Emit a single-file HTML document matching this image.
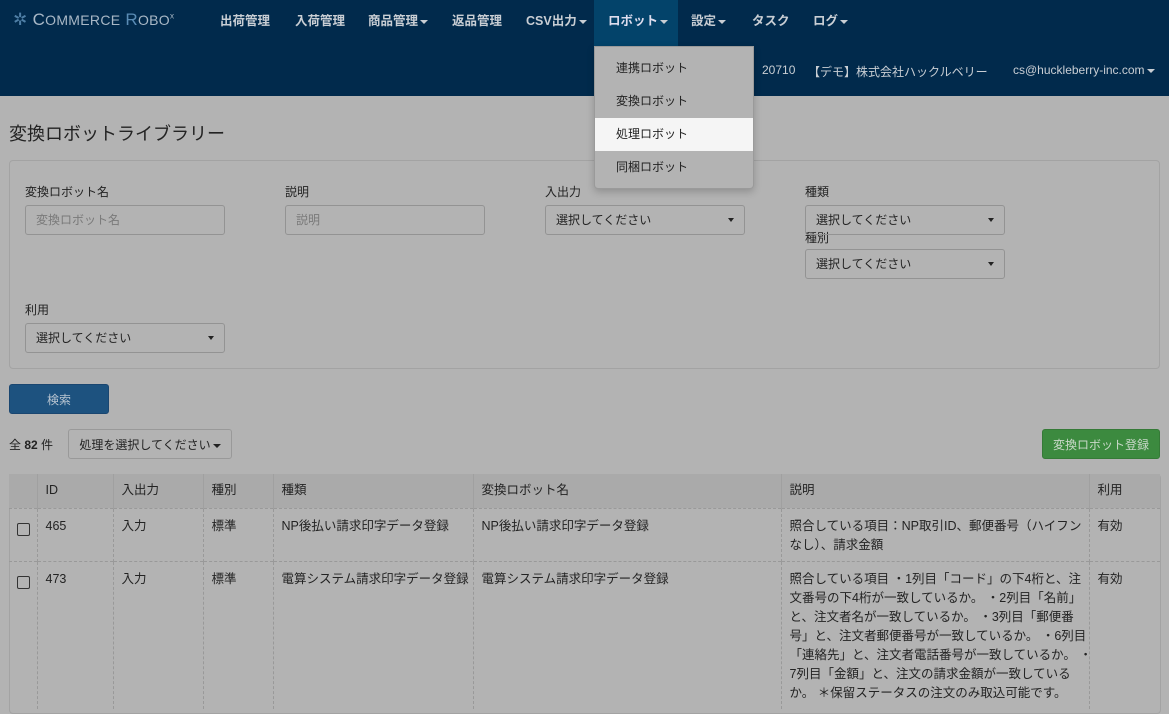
<!DOCTYPE html>
<html><head><meta charset="utf-8"><style>
*{box-sizing:border-box;margin:0;padding:0}
body{width:1169px;height:700px;overflow:hidden;background:#b3b3b3;font-family:"Liberation Sans","Noto Sans CJK JP",sans-serif;font-size:13px;color:#232323;position:relative}
.hdr{position:absolute;left:0;top:0;width:1169px;height:96px;background:#012a4c}
.nav{position:absolute;top:0;height:46px;line-height:42px;color:#c9ced4;font-size:12.5px;font-weight:bold}
.nav span{position:absolute;white-space:nowrap}
.car{display:inline-block;width:0;height:0;border-left:4px solid transparent;border-right:4px solid transparent;border-top:4px solid #c9ced4;vertical-align:middle;margin-left:2px}
.act{position:absolute;left:594px;top:0;width:84px;height:46px;background:#03436a}
.logo{position:absolute;left:13px;top:10px;color:#a9b8c6;font-size:17px;letter-spacing:0.3px}
.info{position:absolute;top:63px;color:#c9ced4;font-size:12px;white-space:nowrap}
.dd{position:absolute;left:594px;top:46px;width:160px;height:143px;background:#b3b3b3;border:1px solid #9a9a9a;border-radius:0 0 4px 4px;box-shadow:0 3px 8px rgba(0,0,0,.2)}
.dd div{height:33px;line-height:33px;padding-left:21px;font-size:12px}
.dd .hl{background:#f5f5f5}
h1{position:absolute;left:9px;top:120px;font-size:18px;font-weight:normal}
.panel{position:absolute;left:9px;top:160px;width:1151px;height:209px;border:1px solid #a3a3a3;border-radius:4px}
.lbl{position:absolute;font-size:12px}
.inp{position:absolute;width:200px;height:30px;border:1px solid #939393;border-radius:3px;line-height:28px;padding-left:10px;font-size:12px}
.ph{color:#7a7a7a}
.sel::after{content:"";position:absolute;right:10px;top:12px;border-left:3px solid transparent;border-right:3px solid transparent;border-top:4px solid #222}
.btn{position:absolute;height:30px;border-radius:3px;line-height:30px;text-align:center;font-size:12px}
table{position:absolute;left:9px;top:474px;width:1151px;border-collapse:collapse;font-size:12.5px;table-layout:fixed}
.tw{position:absolute;left:9px;top:474px;width:1152px;height:240px;border:1px solid #a3a3a3;border-radius:4px}
td,th{vertical-align:top;text-align:left;font-weight:normal;padding:8px 8px 6px;border-left:1px dashed #999;border-top:1px dashed #999;line-height:19px;white-space:nowrap;overflow:hidden}
th{background:#aaaaaa;border-left:1px solid #a0a0a0;border-top:none;height:34px;padding:7px 8px}
tr>*:first-child{border-left:none}
.cb{display:inline-block;width:13px;height:13px;border:1px solid #333;border-radius:2px;margin-top:6px;margin-left:0}
</style></head><body>
<div class="hdr">
 <div class="logo"><span style="color:#4f7fa6">✲</span> C<span style="font-size:14px">OMMERCE</span> <span style="color:#5a8cb5">R</span><span style="font-size:14px">OBO</span><sup style="font-size:8px">x</sup></div>
 <div class="act"></div>
 <div class="nav">
  <span style="left:220px">出荷管理</span>
  <span style="left:295px">入荷管理</span>
  <span style="left:368px">商品管理<i class="car"></i></span>
  <span style="left:452px">返品管理</span>
  <span style="left:526px">CSV出力<i class="car"></i></span>
  <span style="left:608px;color:#dde">ロボット<i class="car"></i></span>
  <span style="left:691px">設定<i class="car"></i></span>
  <span style="left:752px">タスク</span>
  <span style="left:813px">ログ<i class="car"></i></span>
 </div>
 <div class="info" style="left:762px">20710</div>
 <div class="info" style="left:808px">【デモ】株式会社ハックルベリー</div>
 <div class="info" style="left:1013px">cs@huckleberry-inc.com<i class="car"></i></div>
</div>
<h1>変換ロボットライブラリー</h1>
<div class="panel"></div>
<div class="lbl" style="left:25px;top:183px">変換ロボット名</div>
<div class="lbl" style="left:285px;top:183px">説明</div>
<div class="lbl" style="left:545px;top:183px">入出力</div>
<div class="lbl" style="left:805px;top:183px">種類</div>
<div class="lbl" style="left:805px;top:229px">種別</div>
<div class="lbl" style="left:25px;top:301px">利用</div>
<div class="inp ph" style="left:25px;top:205px">変換ロボット名</div>
<div class="inp ph" style="left:285px;top:205px">説明</div>
<div class="inp sel" style="left:545px;top:205px">選択してください</div>
<div class="inp sel" style="left:805px;top:205px">選択してください</div>
<div class="inp sel" style="left:805px;top:249px">選択してください</div>
<div class="inp sel" style="left:25px;top:323px">選択してください</div>
<div class="dd"><div style="margin-top:5px">連携ロボット</div><div>変換ロボット</div><div class="hl">処理ロボット</div><div>同梱ロボット</div></div>
<div class="btn" style="left:9px;top:384px;width:100px;background:#1d527f;color:#b8c4d0;border:1px solid #1a4670">検索</div>
<div style="position:absolute;left:9px;top:436px;font-size:12px">全 <b>82</b> 件</div>
<div class="btn" style="left:68px;top:429px;width:164px;border:1px solid #999">処理を選択してください<i class="car" style="border-top-color:#222"></i></div>
<div class="btn" style="left:1042px;top:429px;width:118px;background:#3c8a3f;color:#c9d8c9;border:1px solid #357a37">変換ロボット登録</div>
<div class="tw"></div>
<table>
<colgroup><col style="width:28px"><col style="width:76px"><col style="width:90px"><col style="width:70px"><col style="width:200px"><col style="width:308px"><col style="width:308px"><col></colgroup>
<tr><th></th><th>ID</th><th>入出力</th><th>種別</th><th>種類</th><th>変換ロボット名</th><th>説明</th><th>利用</th></tr>
<tr style="height:53px"><td><span class="cb"></span></td><td>465</td><td>入力</td><td>標準</td><td>NP後払い請求印字データ登録</td><td>NP後払い請求印字データ登録</td><td>照合している項目：NP取引ID、郵便番号（ハイフン<br>なし）、請求金額</td><td>有効</td></tr>
<tr><td><span class="cb"></span></td><td>473</td><td>入力</td><td>標準</td><td>電算システム請求印字データ登録</td><td>電算システム請求印字データ登録</td><td>照合している項目 ・1列目「コード」の下4桁と、注<br>文番号の下4桁が一致しているか。 ・2列目「名前」<br>と、注文者名が一致しているか。 ・3列目「郵便番<br>号」と、注文者郵便番号が一致しているか。 ・6列目<br>「連絡先」と、注文者電話番号が一致しているか。 ・<br>7列目「金額」と、注文の請求金額が一致している<br>か。 ＊保留ステータスの注文のみ取込可能です。</td><td>有効</td></tr>
</table>
</body></html>
